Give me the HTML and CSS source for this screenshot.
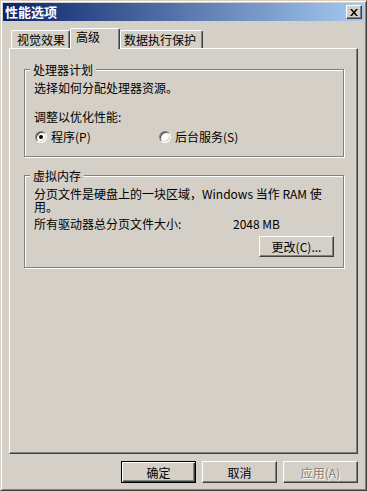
FILE: index.html
```html
<!DOCTYPE html>
<html lang="zh-CN">
<head>
    <meta charset="UTF-8">
    <title>性能选项</title>
    <link rel="stylesheet" href="styles.css">
</head>
<body>
    <div class="window">
        <div class="titlebar">
            <span class="title">性能选项</span>
            <button class="close">
                <svg width="8" height="7" viewBox="0 0 8 7"><path d="M0 0h2l2 2.4 2-2.4h2l-3 3.5 3 3.5h-2l-2-2.4-2 2.4h-2l3-3.5z" fill="#000"/></svg>
            </button>
        </div>
        <div class="content">
            <div class="tabs">
                <div class="tab tab-visual">视觉效果</div>
                <div class="tab tab-adv active">高级</div>
                <div class="tab tab-dep">数据执行保护</div>
            </div>
            <div class="panel">
                <div class="group group-cpu">
                    <span class="legend">处理器计划</span>
                    <p class="line">选择如何分配处理器资源。</p>
                    <p class="line adjust">调整以优化性能:</p>
                    <div class="radios">
                        <label class="radio first"><span class="dot checked"></span>程序(P)</label>
                        <label class="radio"><span class="dot"></span>后台服务(S)</label>
                    </div>
                </div>
                <div class="group group-vm">
                    <span class="legend">虚拟内存</span>
                    <p class="line vm-text">分页文件是硬盘上的一块区域，Windows 当作 RAM 使<br>用。</p>
                    <div class="total">
                        <span class="total-label">所有驱动器总分页文件大小:</span>
                        <span>2048 MB</span>
                    </div>
                    <div class="change-row">
                        <button class="btn">更改(C)...</button>
                    </div>
                </div>
            </div>
            <div class="actions">
                <button class="btn big default">确定</button>
                <button class="btn big">取消</button>
                <button class="btn big disabled">应用(A)</button>
            </div>
        </div>
    </div>
</body>
</html>
```

FILE: styles.css
```css
* {
    box-sizing: border-box;
}
body {
    margin: 0;
    background: #d4d0c8;
    font: 12px "Noto Sans CJK SC", "DejaVu Sans", sans-serif;
    color: #000;
    overflow: hidden;
}
.window {
    width: 367px;
    height: 491px;
    border: 1px solid;
    border-color: #d4d0c8 #404040 #404040 #d4d0c8;
    box-shadow: inset 1px 1px #fff, inset -1px -1px #808080;
    padding: 2px;
    display: flex;
    flex-direction: column;
}
.titlebar {
    height: 18px;
    background: linear-gradient(to right, #0a246a, #a6caf0);
    display: flex;
    align-items: center;
    justify-content: space-between;
    padding: 0 2px;
}
.title {
    color: #fff;
    font-weight: bold;
    font-size: 13px;
    line-height: 18px;
}
.close {
    width: 16px;
    height: 14px;
    padding: 0;
    border: 1px solid;
    border-color: #fff #404040 #404040 #fff;
    box-shadow: inset -1px -1px #808080;
    background: #d4d0c8;
    display: flex;
    align-items: center;
    justify-content: center;
}
.content {
    flex: 1;
    padding: 7px 6px 0;
}
.tabs {
    display: flex;
    align-items: flex-end;
    height: 20px;
    padding-left: 2px;
}
.tab {
    height: 18px;
    border: 1px solid;
    border-bottom: 0;
    border-color: #fff #404040 transparent #fff;
    box-shadow: inset -1px 0 #808080;
    border-radius: 2px 2px 0 0;
    line-height: 18px;
    padding-left: 5px;
    white-space: nowrap;
}
.tab-visual { width: 59px; }
.tab-adv { width: 50px; }
.tab-dep { width: 83px; padding-left: 3px; }
.active {
    height: 21px;
    margin-bottom: -1px;
    line-height: 16px;
    position: relative;
    z-index: 1;
    background: #d4d0c8;
}
.panel {
    height: 406px;
    border: 1px solid;
    border-color: #fff #404040 #404040 #fff;
    box-shadow: inset -1px -1px #808080;
    padding: 20px 13px 0 14px;
}
.group {
    position: relative;
    border: 1px solid #808080;
    box-shadow: 1px 1px #fff, inset 1px 1px #fff;
    padding: 0 9px;
}
.legend {
    position: absolute;
    top: -8px;
    left: 5px;
    padding: 0 3px;
    background: #d4d0c8;
    line-height: 15px;
}
.line {
    margin: 0;
    line-height: 13px;
}
.group-cpu {
    height: 88px;
    padding-top: 11px;
}
.adjust { margin-top: 16px; }
.radios {
    display: flex;
    margin-top: 7px;
    line-height: 13px;
}
.radio {
    display: flex;
    align-items: center;
}
.radio.first { width: 124px; }
.dot {
    position: relative;
    width: 12px;
    height: 12px;
    margin: 0 4px 0 1px;
    border-radius: 50%;
    background: #fff;
    border: 1px solid;
    border-color: #808080 #fff #fff #808080;
    box-shadow: inset 1px 1px #404040, inset -1px -1px #d4d0c8;
}
.dot.checked::after {
    content: "";
    position: absolute;
    left: 3px;
    top: 3px;
    width: 4px;
    height: 4px;
    border-radius: 50%;
    background: #000;
}
.group-vm {
    height: 93px;
    margin-top: 18px;
    padding-top: 11px;
}
.vm-text { line-height: 13px; }
.total {
    display: flex;
    margin-top: 4px;
    line-height: 13px;
}
.total-label { width: 199px; }
.change-row {
    display: flex;
    justify-content: flex-end;
    margin-top: 6px;
}
.btn {
    width: 75px;
    height: 21px;
    padding: 0;
    border: 1px solid;
    border-color: #fff #404040 #404040 #fff;
    box-shadow: inset -1px -1px #808080;
    background: #d4d0c8;
    font: inherit;
    color: #000;
}
.actions {
    display: flex;
    justify-content: flex-end;
    gap: 6px;
    margin-top: 7px;
}
.big { height: 22px; }
.default {
    border-color: #000;
    box-shadow: inset 1px 1px #fff, inset -1px -1px #404040, inset -2px -2px #808080;
}
.disabled {
    color: #808080;
    text-shadow: 1px 1px #fff;
}
```
